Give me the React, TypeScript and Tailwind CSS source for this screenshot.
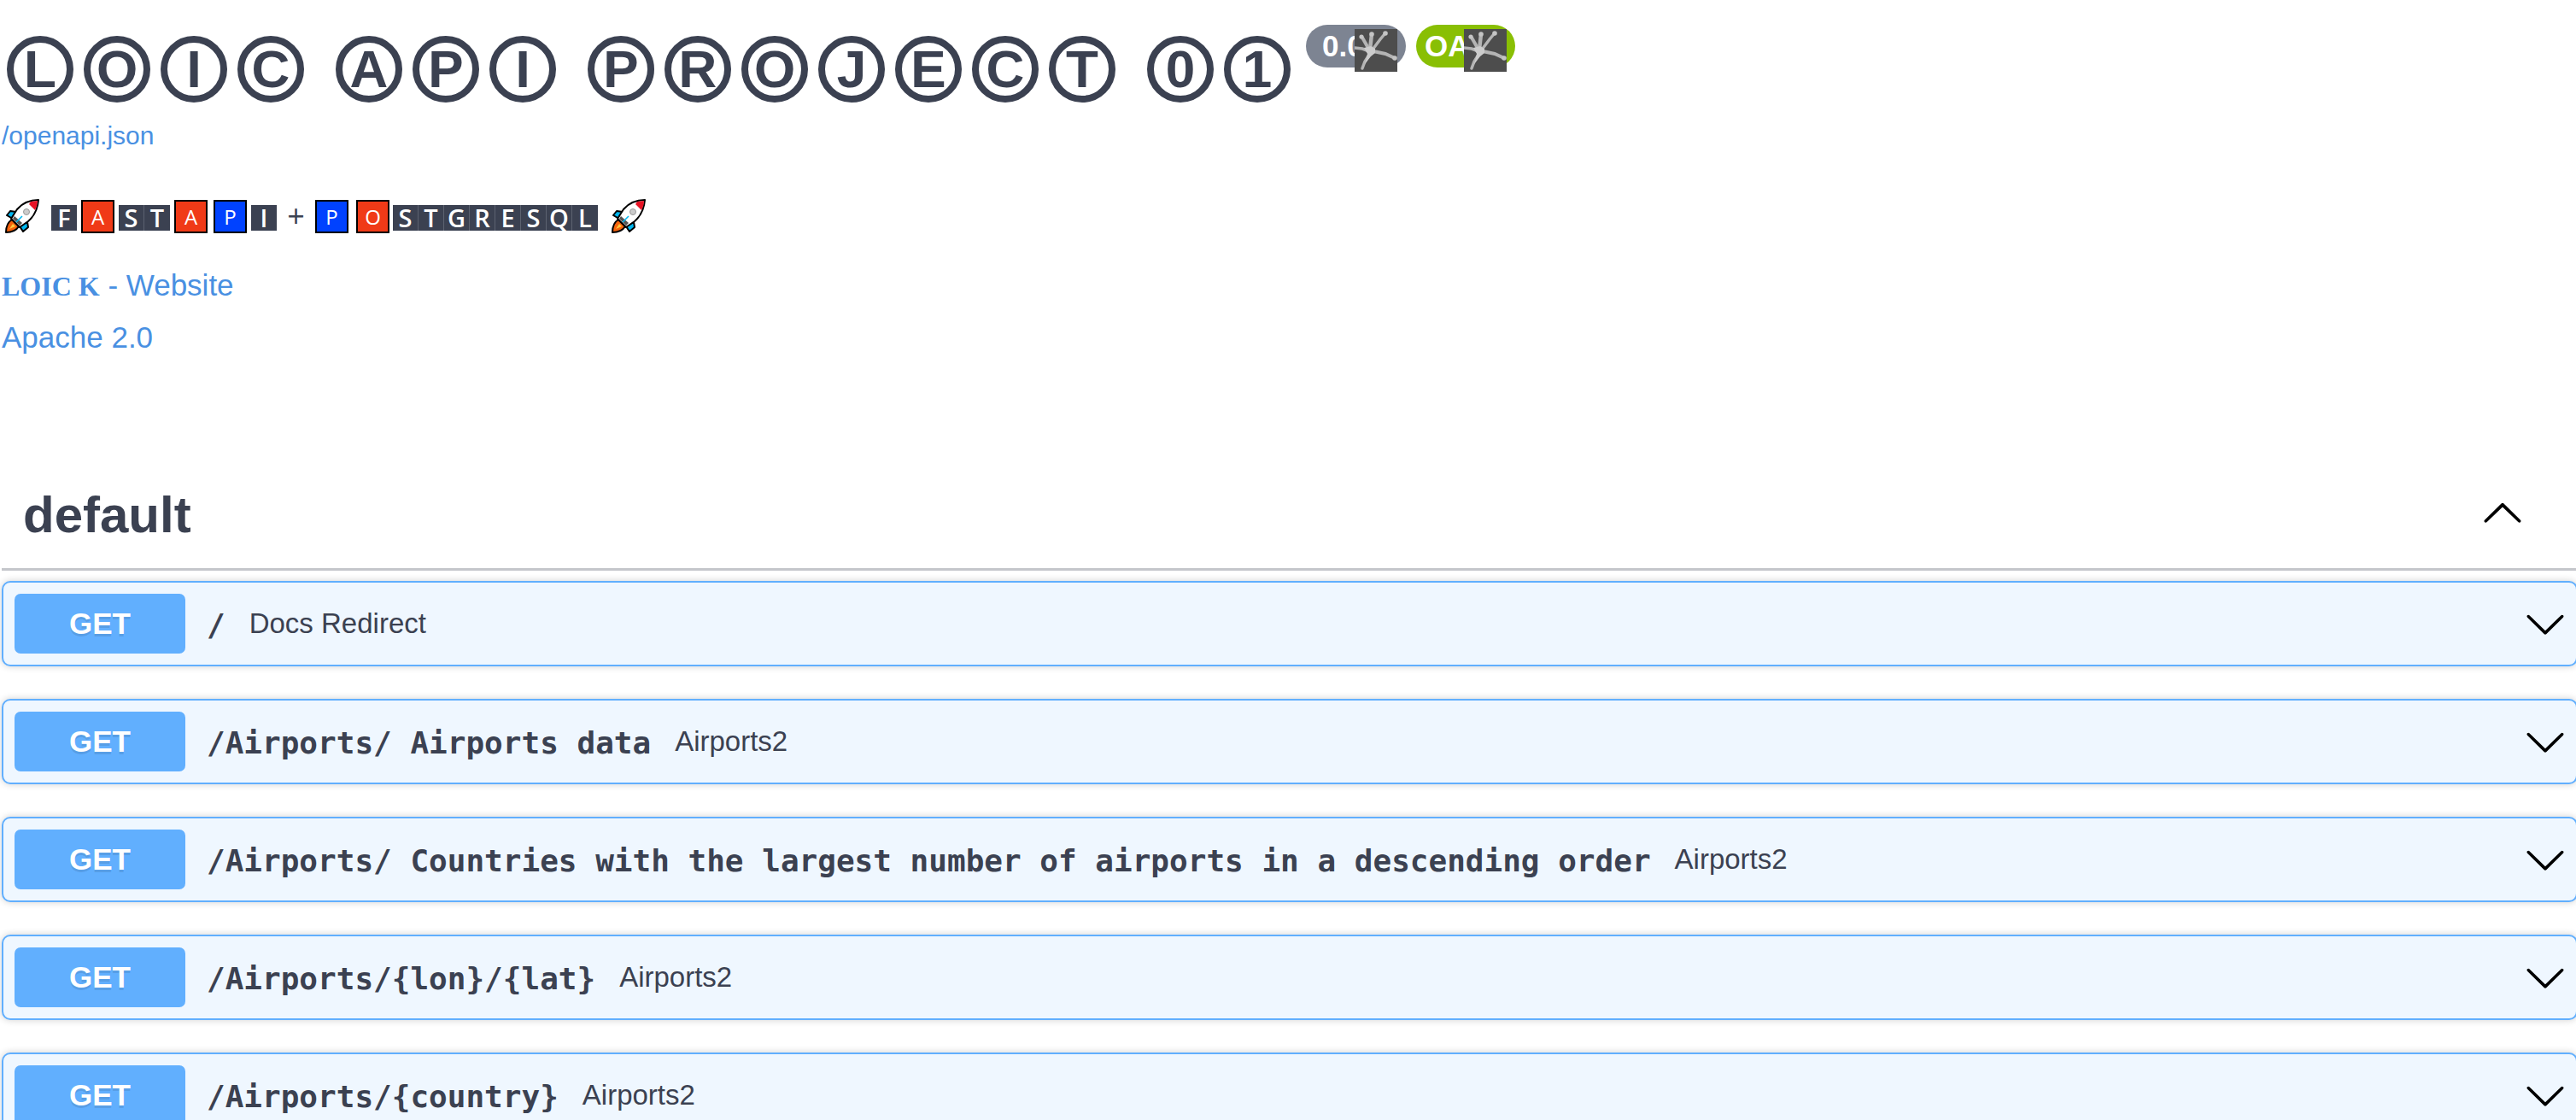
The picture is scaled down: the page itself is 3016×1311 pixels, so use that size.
import React from "react";

const operations = [
  { path: "/", summary: "Docs Redirect" },
  { path: "/Airports/ Airports data", summary: "Airports2" },
  {
    path: "/Airports/ Countries with the largest number of airports in a descending order",
    summary: "Airports2",
  },
  { path: "/Airports/{lon}/{lat}", summary: "Airports2" },
  { path: "/Airports/{country}", summary: "Airports2" },
];

const titleWords = ["LOIC", "API", "PROJECT", "01"];

function CircledWord({ word }: { word: string }) {
  return (
    <span className="flex gap-3">
      {word.split("").map((letter, i) => (
        <span
          key={i}
          className="flex size-[78px] items-center justify-center rounded-full border-8 border-[#3b4151] text-[62px] leading-[62px]"
        >
          {letter}
        </span>
      ))}
    </span>
  );
}

function Hand({ className }: { className: string }) {
  return (
    <svg viewBox="0 0 50 50" className={className} aria-hidden="true">
      <rect width="50" height="50" fill="#4d4d4d" />
      <g stroke="#b4b4b4" strokeLinecap="round" fill="none">
        <path d="M17 24 L9 10" strokeWidth="4" />
        <path d="M18 24 L20 6" strokeWidth="4.5" />
        <path d="M21 24 L30 12 L35 6" strokeWidth="3.5" />
        <path d="M17 26 L9 23 L0 22" strokeWidth="3.5" />
        <path d="M22 26 L36 29 L47 34" strokeWidth="4" />
        <path d="M17 30 L12 38 L9 46" strokeWidth="3.5" />
      </g>
      <g fill="#c4c4c4">
        <circle cx="8" cy="9" r="2.6" />
        <circle cx="20" cy="6" r="2.8" />
        <circle cx="36" cy="5" r="2.8" />
        <circle cx="47" cy="34" r="2.8" />
      </g>
      <path d="M11 22 L19 20 L24 23 L24 28 L19 32 L12 41 L15 29 Z" fill="#cccccc" />
    </svg>
  );
}

function Rocket() {
  return (
    <svg viewBox="0 0 40 40" className="size-10" aria-hidden="true">
      <path d="M13 15 L6 14 L2 19 L9 23 Z" fill="#00b7f0" stroke="#000" strokeWidth="2" strokeLinejoin="round" />
      <path d="M26 27 L27 33 L21 38 L17 32 Z" fill="#00b7f0" stroke="#000" strokeWidth="2" strokeLinejoin="round" />
      <path d="M8 24 C3 27 1 32 1 39 C7 39 13 37 16 32 Z" fill="#f7630c" stroke="#000" strokeWidth="2" strokeLinejoin="round" />
      <path d="M9 29 L5 35 L12 32 Z" fill="#ffc83d" />
      <path d="M39 1 C28 1 20 5 14 12 L7 23 L17 33 L27 26 C34 20 38 13 39 1 Z" fill="#fff" stroke="#000" strokeWidth="2" strokeLinejoin="round" />
      <path d="M38 2 L30 3 L28 6 L35 13 Q38 8 38 2 Z" fill="#e81224" />
      <path d="M9 23 L17 31 L20 28 L11 20 Z" fill="#555" />
      <circle cx="25" cy="15" r="3.5" fill="#ccc" stroke="#999" strokeWidth="1" />
      <path d="M20 20 L13 27" stroke="#00b7f0" strokeWidth="1.5" />
    </svg>
  );
}

function DarkTiles({ letters }: { letters: string }) {
  return (
    <span className="flex">
      {letters.split("").map((letter, i) => (
        <span
          key={i}
          className="flex h-[30px] w-[30px] items-center justify-center border-r border-[#5c6270] bg-[#3b4151] text-[29px] leading-[30px] font-semibold text-white last:border-r-0"
        >
          {letter}
        </span>
      ))}
    </span>
  );
}

function RedTile({ letter }: { letter: string }) {
  return (
    <span className="flex size-[39px] items-center justify-center border-2 border-black bg-[#f03a17] text-[24px] leading-[35px] font-medium text-white">
      {letter}
    </span>
  );
}

function BlueTile({ letter }: { letter: string }) {
  return (
    <span className="flex size-[39px] items-center justify-center border-2 border-black bg-[#0042ff] text-[24px] leading-[35px] font-medium text-white">
      {letter}
    </span>
  );
}

function ChevronDown() {
  return (
    <svg viewBox="0 0 20 20" className="size-[50px] shrink-0" aria-hidden="true">
      <path d="M17.418 6.109c.272-.268.709-.268.979 0s.271.701 0 .969l-7.908 7.83c-.27.268-.707.268-.979 0l-7.908-7.83c-.27-.268-.27-.701 0-.969.271-.268.709-.268.979 0L10 13.25l7.418-7.141z" />
    </svg>
  );
}

function ChevronUp() {
  return (
    <svg viewBox="0 0 20 20" className="size-[50px] shrink-0" aria-hidden="true">
      <path d="M17.418 14.908c.272.268.709.268.979 0s.271-.701 0-.969l-7.908-7.83c-.27-.268-.707-.268-.979 0l-7.908 7.83c-.27.268-.27.701 0 .969.271.268.709.268.979 0L10 7.767l7.418 7.141z" />
    </svg>
  );
}

export default function App() {
  return (
    <div className="h-screen overflow-hidden bg-white pl-[2px] font-['Liberation_Sans',Arial,sans-serif] text-[#3b4151]">
      <header className="flex flex-col items-start pt-[29px]">
        <div className="flex items-start">
          <h1 className="flex gap-[37px] pt-[13px] pl-[6px] font-bold">
            {titleWords.map((word) => (
              <CircledWord key={word} word={word} />
            ))}
          </h1>
          <div className="flex gap-3 pl-[18px] text-[35px] leading-[50px] font-bold text-white">
            <span className="relative h-[50px] w-[117px] rounded-full bg-[#7d8492] pl-[19px]">
              0.0.1
              <Hand className="absolute top-[5px] right-[10px] size-[50px]" />
            </span>
            <span className="relative h-[50px] w-[116px] rounded-full bg-[#89bf04] pl-[10px]">
              OAS3
              <Hand className="absolute top-[5px] right-[10px] size-[50px]" />
            </span>
          </div>
        </div>
        <a href="#openapi" className="mt-[22px] text-[30px] leading-[34px] text-[#4990e2]">
          /openapi.json
        </a>
        <p className="mt-[57px] flex h-10 items-center pl-1 font-['Open_Sans','Noto_Sans',sans-serif]">
          <Rocket />
          <span className="flex items-center gap-[5px] pt-1 pl-[14px]">
            <DarkTiles letters="F" />
            <span className="-mt-1">
              <RedTile letter="A" />
            </span>
            <DarkTiles letters="ST" />
            <span className="-mt-1">
              <RedTile letter="A" />
            </span>
            <span className="-mt-1 pl-[2px]">
              <BlueTile letter="P" />
            </span>
            <DarkTiles letters="I" />
          </span>
          <span className="w-[45px] text-center text-[36px] leading-10">+</span>
          <BlueTile letter="P" />
          <span className="pl-[9px]">
            <RedTile letter="O" />
          </span>
          <span className="pt-1 pr-4 pl-1">
            <DarkTiles letters="STGRESQL" />
          </span>
          <Rocket />
        </p>
        <a href="#website" className="mt-[41px] text-[35px] leading-10 text-[#4990e2]">
          <span className="font-['Liberation_Serif',serif] text-[32px] font-bold">LOIC K</span> - Website
        </a>
        <a href="#license" className="mt-5 text-[35px] leading-10 text-[#4990e2]">
          Apache 2.0
        </a>
      </header>

      <section className="mt-[130px]">
        <div className="flex items-center justify-between border-b-[3px] border-[#c4c6cb] pt-[24px] pr-[61px] pb-[28px] pl-[25px]">
          <h2 className="text-[60px] leading-[68px] font-bold">default</h2>
          <button type="button" aria-label="Collapse default" className="mb-2">
            <ChevronUp />
          </button>
        </div>
        <div className="-mr-[2px] mt-3 flex flex-col gap-[38px]">
          {operations.map((op) => (
            <button
              type="button"
              key={op.path}
              className="flex h-[100px] items-center rounded-[10px] border-2 border-[#61affe] bg-[#eff7ff] pr-[11px] pl-[13px] text-left shadow-[0_0_8px_rgba(0,0,0,0.19)]"
            >
              <span className="w-[200px] rounded-[7px] bg-[#61affe] text-center text-[35px] leading-[70px] font-bold text-white [text-shadow:0_3px_0_rgba(0,0,0,0.1)]">
                GET
              </span>
              <span className="pt-1 pr-7 pl-[25px] font-['DejaVu_Sans_Mono',monospace] text-[36px] leading-[48px] font-bold whitespace-pre">
                {op.path}
              </span>
              <span className="flex-1 text-[33px] leading-[38px]">{op.summary}</span>
              <ChevronDown />
            </button>
          ))}
        </div>
      </section>
    </div>
  );
}
